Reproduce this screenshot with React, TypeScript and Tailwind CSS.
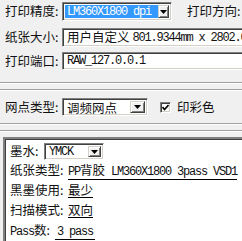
import React from "react";

const cjk = "font-['Noto_Sans_CJK_SC',sans-serif]";
const mono = "font-['Liberation_Mono','Noto_Sans_CJK_SC',monospace] text-[12px] tracking-[-1.2px]";
const sunken =
  "border border-t-[#808080] border-l-[#808080] border-r-white border-b-white shadow-[inset_1px_1px_0_#404040,inset_-1px_-1px_0_#d4d0c8] bg-white";

function Arrow() {
  return (
    <svg width="7" height="4" viewBox="0 0 7 4">
      <polygon points="0,0 7,0 3.5,4" fill="#000" />
    </svg>
  );
}

function DropButton({ className = "" }: { className?: string }) {
  return (
    <span
      className={
        "flex shrink-0 items-center justify-center bg-[#f0f0f0] border border-t-[#d4d0c8] border-l-[#d4d0c8] border-r-[#404040] border-b-[#404040] shadow-[inset_1px_1px_0_#fff,inset_-1px_-1px_0_#808080] " +
        className
      }
    >
      <Arrow />
    </span>
  );
}

function Etched() {
  return (
    <div>
      <div className="h-px bg-[#a0a0a0]" />
      <div className="h-px bg-white" />
    </div>
  );
}

function InfoRow({ label, value, labelClass = "w-[58px]" }: { label: React.ReactNode; value: React.ReactNode; labelClass?: string }) {
  return (
    <div className="flex h-[20px] items-start pt-[3px] whitespace-nowrap">
      <span className={"leading-[14px] " + labelClass}>{label}</span>
      <span className="leading-[14px] border-b border-black">{value}</span>
    </div>
  );
}

export default function App() {
  return (
    <div className={"w-[242px] h-[241px] overflow-hidden bg-[#f0f0f0] text-[12.5px] text-[#111] " + cjk}>
      {/* print settings */}
      <div className="h-[82px] pl-[5px] pt-[2px]">
        <div className="flex h-[19px] items-center whitespace-nowrap">
          <span className="w-[57px] shrink-0">打印精度:</span>
          <div className={"flex h-[19px] w-[110px] shrink-0 items-stretch p-[2px] " + sunken}>
            <span className={"flex-1 overflow-hidden bg-[#3399ff] pl-[2px] leading-[15px] text-white " + mono}>
              LM360X1800 dpi (
            </span>
            <DropButton className="w-[11px]" />
          </div>
          <span className="ml-[15px] shrink-0">打印方向:</span>
        </div>
        <div className="mt-[7px] flex h-[19px] items-center whitespace-nowrap">
          <span className="w-[57px] shrink-0">纸张大小:</span>
          <div className={"flex h-[19px] w-[200px] shrink-0 items-center pl-[4px] " + sunken}>
            <span>用户自定义</span>
            <span className={"ml-[3px] " + mono}>801.9344mm x 2802.0</span>
          </div>
        </div>
        <div className="mt-[5px] flex h-[18px] items-center whitespace-nowrap">
          <span className="w-[57px] shrink-0">打印端口:</span>
          <div className={"flex h-[18px] w-[200px] shrink-0 items-center pl-[4px] " + sunken}>
            <span className={mono}>RAW_127.0.0.1</span>
          </div>
        </div>
      </div>
      <Etched />
      <div className="h-[5px]" />
      <Etched />

      {/* halftone */}
      <div className="flex h-[32px] items-center pl-[5px] whitespace-nowrap">
        <span className="w-[57px] shrink-0">网点类型:</span>
        <div className={"flex h-[18px] w-[86px] shrink-0 items-stretch p-[2px] " + sunken}>
          <span className="flex-1 pl-[2px] leading-[14px]">调频网点</span>
          <DropButton className="w-[15px]" />
        </div>
        <span className={"ml-[12px] flex h-[11px] w-[11px] items-center justify-center " + sunken}>
          <svg width="7" height="7" viewBox="0 0 7 7">
            <polyline points="0.5,3 2.5,5.5 6.5,1" fill="none" stroke="#000" strokeWidth="1.6" />
          </svg>
        </span>
        <span className="ml-[6px]">印彩色</span>
      </div>
      <Etched />
      <div className="h-[5px]" />
      <Etched />
      <div className="h-[5px]" />

      {/* summary panel */}
      <div className="ml-[3px] h-[104px] border-t-2 border-l-2 border-t-[#808080] border-l-[#808080] bg-white pl-[5px] pt-[4px] shadow-[inset_1px_1px_0_#404040]">
        <div className="flex h-[17px] items-center whitespace-nowrap">
          <span className="w-[34px] shrink-0">墨水:</span>
          <div className={"flex h-[17px] w-[60px] shrink-0 items-stretch p-[2px] " + sunken}>
            <span className={"flex-1 pl-[2px] leading-[13px] " + mono}>YMCK</span>
            <DropButton className="w-[13px]" />
          </div>
        </div>
        <InfoRow
          label="纸张类型:"
          value={
            <>
              <span className={mono}>PP</span>背胶<span className={mono}> LM360X1800 3pass VSD1</span>
            </>
          }
        />
        <InfoRow label="黑墨使用:" value="最少" />
        <InfoRow label="扫描模式:" value="双向" />
        <InfoRow
          labelClass="w-[45px]"
          label={
            <>
              <span className={mono}>Pass</span>数:
            </>
          }
          value={<span className={"px-[2px] " + mono}>3 pass</span>}
        />
      </div>
    </div>
  );
}
